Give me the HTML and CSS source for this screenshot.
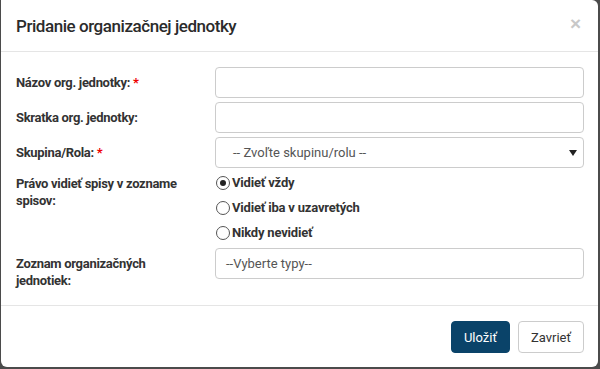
FILE: index.html
```html
<!DOCTYPE html>
<html lang="sk">
<head>
    <meta charset="UTF-8">
    <title>Pridanie organizačnej jednotky</title>
    <link rel="stylesheet" href="styles.css">
</head>
<body>

    <div class="modal">
        <div class="modal-header">
            <h4 class="modal-title">Pridanie organizačnej jednotky</h4>
            <span class="close">&times;</span>
        </div>

        <div class="modal-body">
            <div class="form-row">
                <label class="form-label">Názov org. jednotky: <span class="req">*</span></label>
                <input type="text" class="form-control">
            </div>

            <div class="form-row">
                <label class="form-label">Skratka org. jednotky:</label>
                <input type="text" class="form-control">
            </div>

            <div class="form-row">
                <label class="form-label">Skupina/Rola: <span class="req">*</span></label>
                <div class="form-control select">
                    <span>-- Zvoľte skupinu/rolu --</span>
                    <span class="caret"></span>
                </div>
            </div>

            <div class="form-row radio-row">
                <label class="form-label">Právo vidieť spisy v zozname spisov:</label>
                <div class="radio-group">
                    <label class="radio"><span class="radio-dot checked"></span>Vidieť vždy</label>
                    <label class="radio"><span class="radio-dot"></span>Vidieť iba v uzavretých</label>
                    <label class="radio"><span class="radio-dot"></span>Nikdy nevidieť</label>
                </div>
            </div>

            <div class="form-row">
                <label class="form-label">Zoznam organizačných jednotiek:</label>
                <div class="form-control multi">--Vyberte typy--</div>
            </div>
        </div>

        <div class="modal-footer">
            <button class="btn btn-primary">Uložiť</button>
            <button class="btn btn-default">Zavrieť</button>
        </div>
    </div>

</body>
</html>
```

FILE: styles.css
```css
body {
    margin: 0;
    background: #4b4b4b;
    font-family: Roboto, "Liberation Sans", Arial, sans-serif;
    font-size: 13px;
    color: #333;
}
.modal {
    width: 597px;
    height: 367px;
    margin-left: 1px;
    background: #fff;
    border-radius: 0 6px 6px 6px;
    display: flex;
    flex-direction: column;
}
.modal-header {
    height: 52px;
    flex-shrink: 0;
    box-sizing: border-box;
    padding: 15px 15px;
    border-bottom: 1px solid #e5e5e5;
    display: flex;
    justify-content: space-between;
    align-items: center;
}
.modal-title {
    margin: 0;
    font-size: 17px;
    font-weight: 500;
    line-height: 22px;
    letter-spacing: -0.45px;
    color: #2b2b2b;
}
.close {
    font-family: "Liberation Sans", Arial, sans-serif;
    font-size: 19px;
    font-weight: bold;
    color: #c8c8c8;
    margin-right: 2px;
    margin-top: -4px;
}
.modal-body {
    padding: 15px 14px 0 15px;
    height: 254px;
    flex-shrink: 0;
    box-sizing: border-box;
    border-bottom: 1px solid #e5e5e5;
}
.form-row {
    display: flex;
    margin-bottom: 4px;
}
.form-label {
    width: 199px;
    flex-shrink: 0;
    padding-top: 7px;
    padding-right: 25px;
    box-sizing: border-box;
    font-weight: bold;
    line-height: 17px;
    letter-spacing: -0.3px;
}
.req {
    color: #e00;
}
.form-control {
    flex: 1;
    height: 31px;
    box-sizing: border-box;
    border: 1px solid #ccc;
    border-radius: 4px;
    padding: 6px 10px;
    font: inherit;
    color: #555;
    background: #fff;
}
.select {
    display: flex;
    justify-content: space-between;
    align-items: center;
    padding-left: 17px;
    padding-right: 6px;
}
.caret {
    width: 0;
    height: 0;
    border-left: 4px solid transparent;
    border-right: 4px solid transparent;
    border-top: 6px solid #222;
}
.multi {
    padding-left: 10px;
    line-height: 17px;
}
.radio-row {
    margin-top: -2px;
    margin-bottom: 3px;
}
.radio-row .form-label {
    padding-top: 5px;
}
.radio-group {
    display: flex;
    flex-direction: column;
}
.radio {
    height: 25px;
    display: flex;
    align-items: center;
    font-weight: bold;
    letter-spacing: -0.2px;
}
.radio-dot {
    width: 12px;
    height: 12px;
    border: 1px solid #555;
    border-radius: 50%;
    margin: 0 2px 0 1px;
    box-sizing: content-box;
    position: relative;
}
.radio-dot.checked::after {
    content: "";
    position: absolute;
    left: 3px;
    top: 3px;
    width: 6px;
    height: 6px;
    border-radius: 50%;
    background: #222;
}
.modal-footer {
    padding: 15px 14px 14px 15px;
    display: flex;
    justify-content: flex-end;
    gap: 8px;
}
.btn {
    height: 32px;
    padding: 0 12px;
    border-radius: 4px;
    font-family: inherit;
    font-size: 13px;
    border: 1px solid #ccc;
}
.btn-primary {
    background: #0a4369;
    border-color: #0a4369;
    color: #fff;
}
.btn-default {
    background: #fff;
    color: #333;
}
```
